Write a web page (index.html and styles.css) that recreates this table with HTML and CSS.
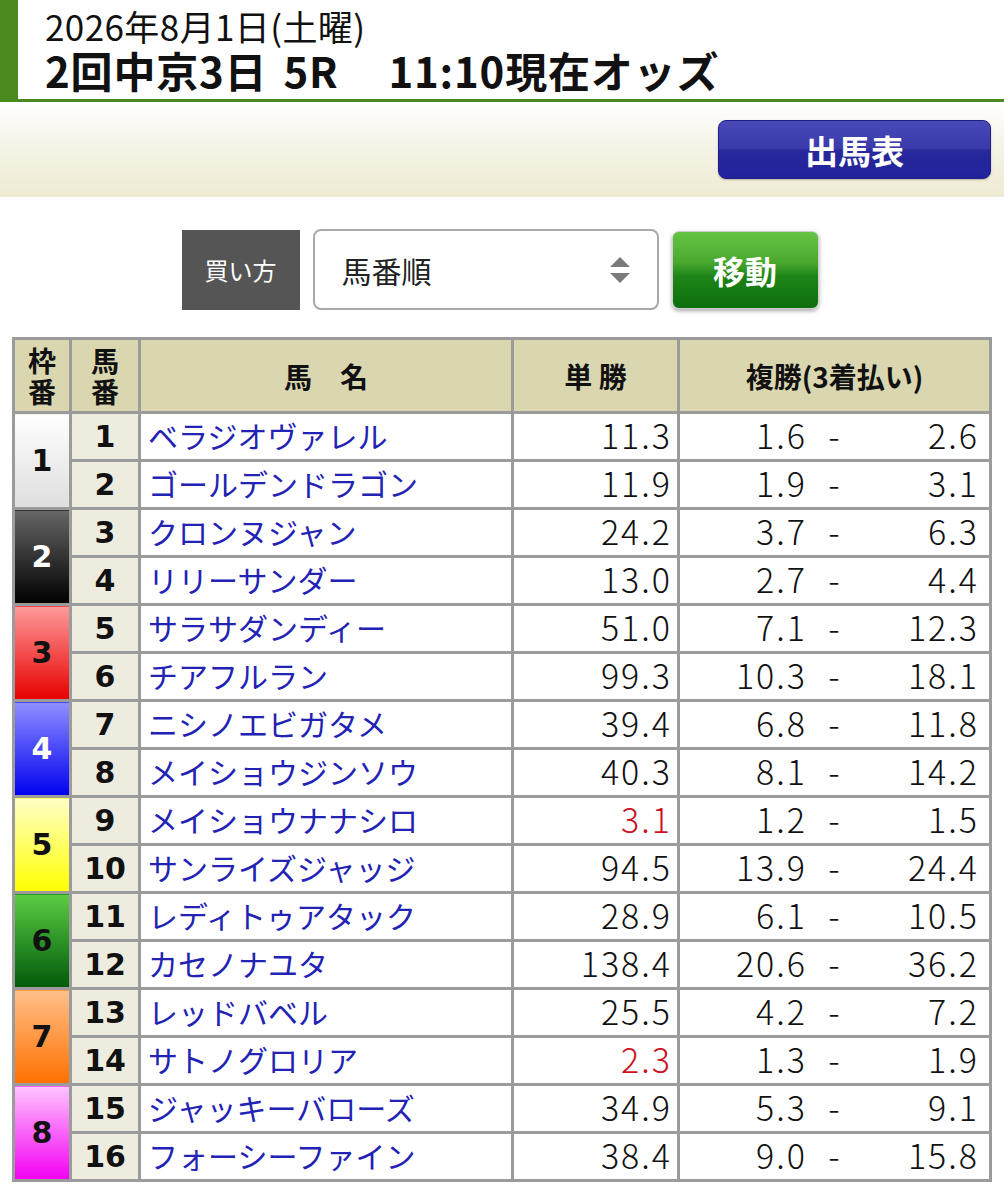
FILE: index.html
```html
<!DOCTYPE html>
<html lang="ja">
<head>
<meta charset="utf-8">
<title>オッズ</title>
<link rel="stylesheet" href="styles.css">
</head>
<body>
<header class="head">
  <div class="date">2026年8月1日(土曜)</div>
  <div class="race">2回中京3日<span class="gap-s"></span>5R<span class="gap"></span>11:10現在オッズ</div>
</header>
<div class="band">
  <a class="btn-blue">出馬表</a>
</div>
<div class="controls">
  <div class="label">買い方</div>
  <div class="select">
    <span>馬番順</span>
    <svg class="arrows" width="22" height="30" viewBox="0 0 22 30"><polygon points="11,2 21,12 1,12" fill="#7a7a7a"/><polygon points="1,18 21,18 11,28" fill="#7a7a7a"/></svg>
  </div>
  <a class="btn-green">移動</a>
</div>
<table class="odds">
  <thead>
    <tr>
      <th class="c-waku"><span class="stack">枠</span><span class="stack">番</span></th>
      <th class="c-uma"><span class="stack">馬</span><span class="stack">番</span></th>
      <th class="c-name">馬　名</th>
      <th class="c-win">単&nbsp;勝</th>
      <th class="c-place">複勝(3着払い)</th>
    </tr>
  </thead>
  <tbody>
    <tr><td class="waku w1" rowspan="2">1</td><td class="uma">1</td><td class="name">ベラジオヴァレル</td><td class="win">11.3</td><td class="place"><div class="pl"><span class="lo">1.6</span><span class="dash">-</span><span class="hi">2.6</span></div></td></tr>
    <tr><td class="uma">2</td><td class="name">ゴールデンドラゴン</td><td class="win">11.9</td><td class="place"><div class="pl"><span class="lo">1.9</span><span class="dash">-</span><span class="hi">3.1</span></div></td></tr>
    <tr><td class="waku w2" rowspan="2">2</td><td class="uma">3</td><td class="name">クロンヌジャン</td><td class="win">24.2</td><td class="place"><div class="pl"><span class="lo">3.7</span><span class="dash">-</span><span class="hi">6.3</span></div></td></tr>
    <tr><td class="uma">4</td><td class="name">リリーサンダー</td><td class="win">13.0</td><td class="place"><div class="pl"><span class="lo">2.7</span><span class="dash">-</span><span class="hi">4.4</span></div></td></tr>
    <tr><td class="waku w3" rowspan="2">3</td><td class="uma">5</td><td class="name">サラサダンディー</td><td class="win">51.0</td><td class="place"><div class="pl"><span class="lo">7.1</span><span class="dash">-</span><span class="hi">12.3</span></div></td></tr>
    <tr><td class="uma">6</td><td class="name">チアフルラン</td><td class="win">99.3</td><td class="place"><div class="pl"><span class="lo">10.3</span><span class="dash">-</span><span class="hi">18.1</span></div></td></tr>
    <tr><td class="waku w4" rowspan="2">4</td><td class="uma">7</td><td class="name">ニシノエビガタメ</td><td class="win">39.4</td><td class="place"><div class="pl"><span class="lo">6.8</span><span class="dash">-</span><span class="hi">11.8</span></div></td></tr>
    <tr><td class="uma">8</td><td class="name">メイショウジンソウ</td><td class="win">40.3</td><td class="place"><div class="pl"><span class="lo">8.1</span><span class="dash">-</span><span class="hi">14.2</span></div></td></tr>
    <tr><td class="waku w5" rowspan="2">5</td><td class="uma">9</td><td class="name">メイショウナナシロ</td><td class="win fav">3.1</td><td class="place"><div class="pl"><span class="lo">1.2</span><span class="dash">-</span><span class="hi">1.5</span></div></td></tr>
    <tr><td class="uma">10</td><td class="name">サンライズジャッジ</td><td class="win">94.5</td><td class="place"><div class="pl"><span class="lo">13.9</span><span class="dash">-</span><span class="hi">24.4</span></div></td></tr>
    <tr><td class="waku w6" rowspan="2">6</td><td class="uma">11</td><td class="name">レディトゥアタック</td><td class="win">28.9</td><td class="place"><div class="pl"><span class="lo">6.1</span><span class="dash">-</span><span class="hi">10.5</span></div></td></tr>
    <tr><td class="uma">12</td><td class="name">カセノナユタ</td><td class="win">138.4</td><td class="place"><div class="pl"><span class="lo">20.6</span><span class="dash">-</span><span class="hi">36.2</span></div></td></tr>
    <tr><td class="waku w7" rowspan="2">7</td><td class="uma">13</td><td class="name">レッドバベル</td><td class="win">25.5</td><td class="place"><div class="pl"><span class="lo">4.2</span><span class="dash">-</span><span class="hi">7.2</span></div></td></tr>
    <tr><td class="uma">14</td><td class="name">サトノグロリア</td><td class="win fav">2.3</td><td class="place"><div class="pl"><span class="lo">1.3</span><span class="dash">-</span><span class="hi">1.9</span></div></td></tr>
    <tr><td class="waku w8" rowspan="2">8</td><td class="uma">15</td><td class="name">ジャッキーバローズ</td><td class="win">34.9</td><td class="place"><div class="pl"><span class="lo">5.3</span><span class="dash">-</span><span class="hi">9.1</span></div></td></tr>
    <tr><td class="uma">16</td><td class="name">フォーシーファイン</td><td class="win">38.4</td><td class="place"><div class="pl"><span class="lo">9.0</span><span class="dash">-</span><span class="hi">15.8</span></div></td></tr>
  </tbody>
</table>
</body>
</html>
```

FILE: styles.css
```css
* { box-sizing: border-box; }
html, body { margin: 0; padding: 0; background: #fff; }
body {
  font-family: "Noto Sans CJK JP", "Noto Sans", sans-serif;
  color: #111;
  width: 1004px;
}
.head {
  border-left: 18px solid #4a8a1f;
  border-bottom: 3px solid #4a8a1f;
  height: 102px;
  padding: 7px 0 0 27px;
}
.date {
  font-size: 35px;
  line-height: 38px;
  font-weight: 400;
  letter-spacing: 0.4px;
}
.race {
  font-size: 42px;
  line-height: 50px;
  font-weight: 700;
  letter-spacing: 0.8px;
}
.gap-s { display: inline-block; width: 16px; }
.gap { display: inline-block; width: 50px; }
.band {
  height: 95px;
  background: linear-gradient(#ffffff 0%, #f6f4e8 45%, #eeead2 100%);
  display: flex;
  justify-content: flex-end;
  padding: 18px 13px 0 0;
}
.btn-blue {
  width: 273px;
  height: 59px;
  border-radius: 8px;
  border: 1px solid #1e1e86;
  background: linear-gradient(#4848b8 0%, #3a3aac 48%, #28289c 52%, #22229a 100%);
  color: #fff;
  font-size: 33px;
  font-weight: 700;
  display: flex;
  align-items: center;
  justify-content: center;
  box-shadow: 0 1px 2px rgba(0,0,0,0.25);
}
.controls {
  display: flex;
  justify-content: center;
  align-items: center;
  gap: 13px;
  margin-top: 32px;
  padding-right: 4px;
  height: 81px;
}
.label {
  width: 118px;
  height: 80px;
  background: #555555;
  color: #fff;
  font-size: 24px;
  display: flex;
  align-items: center;
  justify-content: center;
}
.select {
  width: 346px;
  height: 81px;
  border: 2px solid #a9a9a9;
  border-radius: 8px;
  display: flex;
  align-items: center;
  justify-content: space-between;
  padding: 0 26px 0 27px;
  font-size: 30px;
  color: #222;
}
.btn-green {
  width: 147px;
  height: 78px;
  border-radius: 7px;
  border: 1px solid #cfcfcf;
  background: linear-gradient(#66c444 0%, #4aa82e 40%, #1f8418 58%, #0d6e0d 100%);
  color: #fff;
  font-size: 32px;
  font-weight: 700;
  display: flex;
  align-items: center;
  justify-content: center;
  box-shadow: 0 2px 4px rgba(0,0,0,0.35);
}
.odds {
  margin: 27px 0 0 12px;
  width: 980px;
  border-collapse: collapse;
  border: 3px solid #9b9b9b;
  table-layout: fixed;
}
.odds th, .odds td {
  border: 3px solid #9b9b9b;
  padding: 0;
}
.odds th {
  background: #d9d6b0;
  font-size: 28px;
  font-weight: 700;
  height: 74px;
  line-height: 32px;
}
.stack { display: block; line-height: 31px; }
.c-waku { width: 57px; }
.c-uma { width: 69px; }
.c-name { width: 373px; }
.c-win { width: 166px; }
.c-place { width: auto; }
.odds td {
  height: 48px;
  font-size: 30px;
  line-height: 40px;
}
.waku {
  text-align: center;
  font-family: "DejaVu Sans", "Noto Sans CJK JP", sans-serif;
  font-weight: 700;
  font-size: 31px;
}
.w1 { background: linear-gradient(#ffffff, #dedede); color: #111; }
.w2 { background: linear-gradient(#666666, #000000); color: #fff; }
.w3 { background: linear-gradient(#ff9a9a, #e80000); color: #111; }
.w4 { background: linear-gradient(#8f8fff, #0000f0); color: #fff; }
.w5 { background: linear-gradient(#ffffc8, #ffff00); color: #111; }
.w6 { background: linear-gradient(#5ccc44, #005a0a); color: #111; }
.w7 { background: linear-gradient(#ffc08a, #ff7000); color: #111; }
.w8 { background: linear-gradient(#ffc4ff, #f200f2); color: #111; }
.uma {
  background: #eeecdf;
  text-align: center;
  font-family: "DejaVu Sans", "Noto Sans CJK JP", sans-serif;
  font-weight: 700;
  font-size: 31px;
}
.odds td.name, .odds td.win, .odds td.place { padding-bottom: 4px; }
.odds td.name {
  color: #2222b4;
  padding-left: 7px;
  white-space: nowrap;
}
.odds td.win {
  text-align: right;
  padding-right: 5px;
  font-size: 34px;
  font-weight: 300;
  letter-spacing: 2px;
}
.odds td.fav { color: #cc1122; }
.odds td.place { font-size: 34px; font-weight: 300; letter-spacing: 2px; }
.pl {
  display: flex;
  padding-right: 10px;
}
.lo { width: 127px; text-align: right; }
.dash { width: 56px; text-align: center; }
.hi { flex: 1; text-align: right; }
```
